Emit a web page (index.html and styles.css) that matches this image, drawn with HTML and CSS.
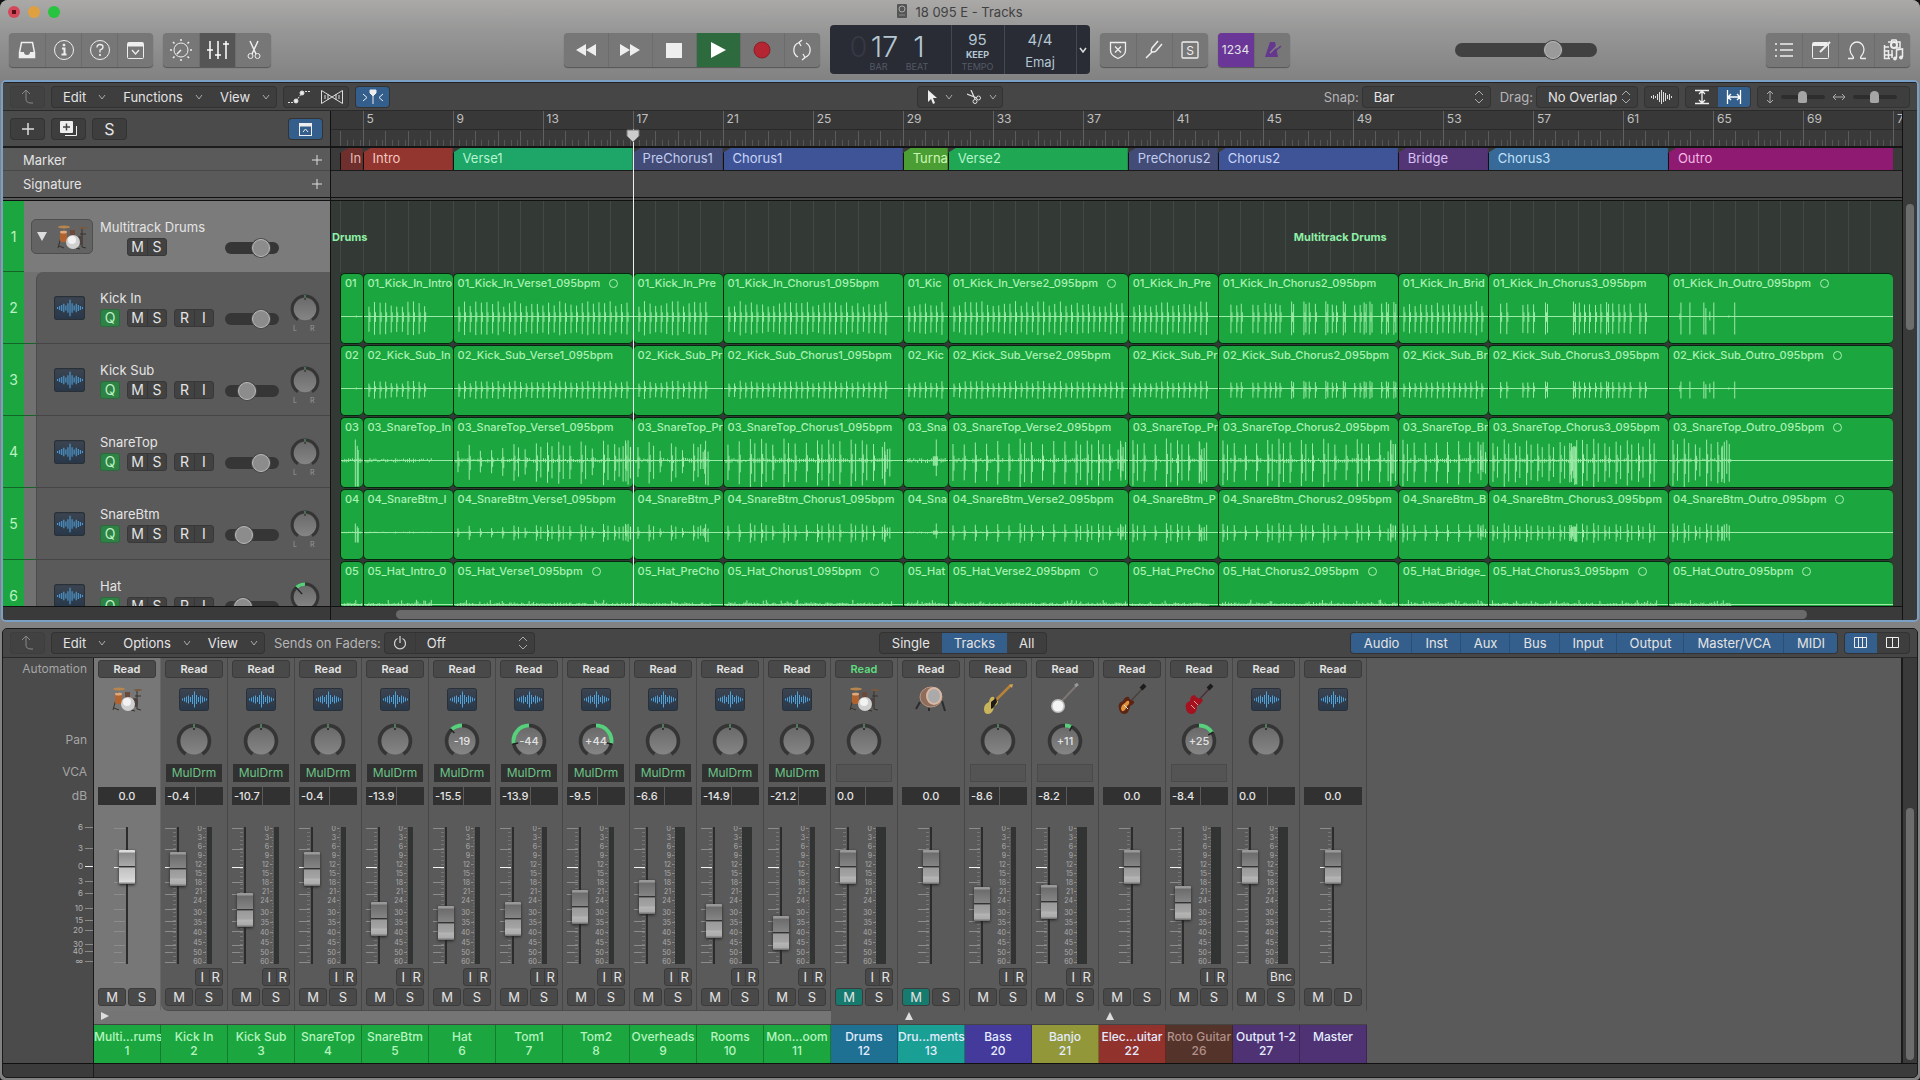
FILE: index.html
```
<!DOCTYPE html>
<html lang="en">
<head>
    <meta charset="UTF-8">
    <meta name="viewport" content="width=device-width, initial-scale=1.0">
    <title>18 095 E - Tracks</title>
    <link rel="stylesheet" href="styles.css">
</head>
<body>
    <!-- Shared icons -->
    <svg class="defs" width="0" height="0">
        <defs>
            <linearGradient id="waveBg" x1="0" y1="0" x2="0" y2="1">
                <stop offset="0" stop-color="#3c4450"/><stop offset="1" stop-color="#28384a"/>
            </linearGradient>
            <linearGradient id="knobBg" x1="0" y1="0" x2="0" y2="1">
                <stop offset="0" stop-color="#6a6a6a"/><stop offset="1" stop-color="#858585"/>
            </linearGradient>
            <symbol id="chev" viewBox="0 0 8 6"><path d="M1 1l3 4 3-4" fill="none" stroke="#aaa"/></symbol>
            <symbol id="updown" viewBox="0 0 10 14"><path d="M1 5l4-4 4 4M1 9l4 4 4-4" fill="none" stroke="#aaa"/></symbol>
            <symbol id="up" viewBox="0 0 14 16"><path d="M1 5l4-4 4 4M5 1v9q0 4 5 4h2" fill="none" stroke="#888"/></symbol>
            <symbol id="wave" viewBox="0 0 30 23">
                <rect x=".5" y=".5" width="29" height="22" rx="2" fill="url(#waveBg)" stroke="#2a3038"/>
                <path d="M3.500 10.500v2M5.500 9.500v4M7.500 8.500v6M9.500 7.500v8M11.500 9v5M13.500 7v9M15.500 3.500v16M17.500 7v9M19.500 9v5M21.500 7.500v8M23.500 8.500v6M25.500 9.500v4M27.500 10.500v2" stroke="#4fa3dd" fill="none"/>
            </symbol>
            <symbol id="kit" viewBox="0 0 32 26">
                <path d="M7 6L2 24M26 3v20l4 1M3 22l5 2M24 10h6M20 24l4 1" stroke="#37302c" fill="none"/>
                <ellipse cx="8" cy="3" rx="6" ry="1.500" fill="#b8854c"/>
                <ellipse cx="27" cy="4" rx="4" ry="1" fill="#7a5a3e"/>
                <rect x="4" y="8" width="7" height="10" rx="2" fill="#b0622f"/>
                <ellipse cx="7.500" cy="8" rx="3.500" ry="1.500" fill="#e0a878"/>
                <rect x="14" y="6" width="5" height="6" fill="#6b4a3a"/>
                <rect x="21" y="12" width="6" height="9" rx="3" fill="#4c4340"/>
                <circle cx="17" cy="18" r="7" fill="#cfcfcf"/><circle cx="16" cy="16" r="4" fill="#f2f2f2"/>
            </symbol>
            <symbol id="snare" viewBox="0 0 32 26">
                <path d="M5 16L1 23M27 15l3 10M14 22v3" stroke="#2b2b2b" stroke-width="2"/>
                <ellipse cx="16" cy="11" rx="11" ry="10" fill="#8f6d5c" stroke="#b89683"/>
                <ellipse cx="19" cy="10" rx="7" ry="8" fill="#aaa" stroke="#d9b9a4" stroke-width="2"/>
            </symbol>
            <symbol id="bass" viewBox="0 0 32 32">
                <path d="M13 18L29 2" stroke="#b9823a" stroke-width="2.500"/><path d="M27 2l4-1-1 4z" fill="#d7a655"/>
                <path d="M2 26q0-5 5-7 1-6 5-5 0 4 4 4 0 4-4 5-1 8-6 8-4 0-4-5z" fill="#c9b45c"/>
                <path d="M9 19l5-4 1 4-4 6-2 1z" fill="#1e1a16"/>
            </symbol>
            <symbol id="banjo" viewBox="0 0 32 32">
                <path d="M11 20L28 2" stroke="#7d7672" stroke-width="2"/><path d="M26 3l3-2" stroke="#999" stroke-width="3"/>
                <circle cx="9" cy="23" r="7" fill="#bbb"/><circle cx="9" cy="23" r="5.500" fill="#f4f4f4"/>
            </symbol>
            <symbol id="gtr" viewBox="0 0 32 32">
                <path d="M13 20L27 5" stroke="#4b4039" stroke-width="1.500"/><path d="M25 6l4-4" stroke="#1c1c1c" stroke-width="4"/>
                <path d="M3 26q-2-6 4-8 2-5 6-4 0 3 5 4 1 3-4 5-1 7-5 8-5 0-6-5z" fill="#5c2414"/>
                <path d="M5 26q0-4 4-6 2-3 4-2 1 3-2 5-2 6-5 5z" fill="#e2933a"/><path d="M8 22l4 4" stroke="#ddd"/>
            </symbol>
            <symbol id="roto" viewBox="0 0 32 32">
                <path d="M13 20L27 5" stroke="#4b3039" stroke-width="1.500"/><path d="M25 6l4-4" stroke="#1c1c1c" stroke-width="4"/>
                <path d="M3 26q-2-6 4-8 0-6 5-6 1 4 8 4-1 5-6 7 0 7-5 8-5 0-6-5z" fill="#a5121f"/>
                <path d="M8 22l4 4M11 18l4 4" stroke="#e8a0a0"/>
            </symbol>
        </defs>
    </svg>

    <div class="app">
        <!-- Title bar and transport -->
        <header>
            <div class="titlebar">
                <div class="lights"><i class="red"></i><i class="yellow"></i><i class="green"></i></div>
                <h1><svg width="10" height="14" viewBox="0 0 10 14"><rect width="10" height="14" rx="1" fill="#555"/><circle cx="5" cy="5" r="3" fill="none" stroke="#aaa"/><path d="M2 11h6" stroke="#888"/></svg>18 095 E - Tracks</h1>
            </div>
            <div class="toolbar">
                <div class="side">
                    <div class="group">
                        <button aria-label="Library"><svg width="20" height="20"><path d="M4.500 2.500h11l2 10v5h-15v-5z" fill="none" stroke="#eee" stroke-width="1.500"/><path d="M2 12h5q0 3 3 3t3-3h5v6H2z" fill="#eee"/></svg></button>
                        <button aria-label="Inspector"><svg width="22" height="22" fill="none" stroke="#eee"><circle cx="11" cy="11" r="9.500"/><path d="M9 9.500h2.500V15M8.500 15.500h5" stroke-width="2"/><circle cx="11" cy="6" r="1" fill="#eee"/></svg></button>
                        <button aria-label="Quick Help"><svg width="22" height="22" fill="none" stroke="#eee"><circle cx="11" cy="11" r="9.500"/><path d="M8 8.500q0-3 3-3t3 2.500q0 2-3 3v2.500" stroke-width="1.300"/><circle cx="11" cy="16" r=".7" fill="#eee"/></svg></button>
                        <button aria-label="Toolbar"><svg width="20" height="20" fill="none" stroke="#eee"><rect x="1.500" y="2.500" width="16" height="16" rx="1"/><path d="M2 4.500h15" stroke-width="4"/><path d="M6 10l3.500 4 3.500-4" stroke-width="1.300"/></svg></button>
                    </div>
                    <div class="group">
                        <button aria-label="Smart Controls"><svg width="24" height="24" fill="none" stroke="#eee"><circle cx="12" cy="12" r="7"/><path d="M12 12l-4 4M12 1v2M12 21v2M1 12h2M21 12h2M4 4l1.500 1.500M20 4l-1.500 1.500M4 20l1.500-1.500M20 20l-1.500-1.500" stroke-width="1.500"/></svg></button>
                        <button class="pressed" aria-label="Mixer"><svg width="22" height="20" fill="none" stroke="#fff" stroke-width="1.500"><path d="M3 1v18M11 1v18M19 1v18M0 10h6M8 15h6M16 4h6"/></svg></button>
                        <button aria-label="Editors"><svg width="16" height="20" fill="none" stroke="#eee"><path d="M4 1l6 13M12 1L6 14" stroke-width="1.500"/><circle cx="4.500" cy="16" r="2.500"/><circle cx="11.500" cy="16" r="2.500"/></svg></button>
                    </div>
                </div>
                <div class="group transport">
                    <button aria-label="Rewind"><svg width="22" height="14"><path d="M11 1v12L1 7zM21 1v12L11 7z" fill="#eee"/></svg></button>
                    <button aria-label="Forward"><svg width="22" height="14"><path d="M1 1v12l10-6zM11 1v12l10-6z" fill="#eee"/></svg></button>
                    <button aria-label="Stop"><svg width="16" height="16"><path d="M0 1h16v15H0z" fill="#eee"/></svg></button>
                    <button class="play" aria-label="Play"><svg width="16" height="18"><path d="M1 1v16l15-8z" fill="#fff"/></svg></button>
                    <button aria-label="Record"><svg width="18" height="18"><circle cx="9" cy="9" r="8" fill="#b32632" stroke="#8c1f29"/></svg></button>
                    <button class="cycle" aria-label="Cycle"><svg width="22" height="22" fill="none" stroke="#eee" stroke-width="1.300"><path d="M8 3.500a8 8 0 0 0-1 14.500M14 18.500A8 8 0 0 0 15 4M11 1l-3 2.500L10 7M11 21l3-2.500L12 15"/></svg></button>
                </div>
                <div class="lcd">
                    <div class="pos">
                        <b class="ghost">0</b><b>17</b><b class="beat">1</b>
                        <small>BAR</small><small class="beat">BEAT</small>
                    </div>
                    <div class="tempo"><span>95</span><em>KEEP</em><small>TEMPO</small></div>
                    <div class="key"><span>4/4</span><span class="maj">Emaj</span></div>
                    <button aria-label="Display mode"><svg width="8" height="6"><path d="M1 1l3 4 3-4" fill="none" stroke="#ddd" stroke-width="1.500"/></svg></button>
                </div>
                <div class="group">
                    <button aria-label="Replace"><svg width="20" height="20" fill="none" stroke="#eee" stroke-width="1.300"><path d="M2.500 2.500h15v8q0 5-7.500 8-7.500-3-7.500-8z"/><path d="M7 6.500l6 6M13 6.500l-6 6"/></svg></button>
                    <button aria-label="Tuner"><svg width="20" height="20" fill="none" stroke="#eee" stroke-width="1.500"><path d="M2 18l6-6M14 1L8 8q-2 4 1 4 2 0 3-1l6-7"/></svg></button>
                    <button aria-label="Solo"><svg width="18" height="20"><rect x="1" y="2" width="16" height="16" rx="1" fill="none" stroke="#eee" stroke-width="1.300"/><text x="9" y="14.500" text-anchor="middle" font-size="12" fill="#eee">S</text></svg></button>
                </div>
                <div class="group">
                    <button class="count">1234</button>
                    <button aria-label="Metronome"><svg width="20" height="20"><path d="M8 2h5l3 15H3z" fill="#65378f"/><path d="M8 13l8-8" stroke="#808080" stroke-width="1.500"/><path d="M11 13l8-7" stroke="#65378f" stroke-width="1.500"/></svg></button>
                </div>
                <div class="side right">
                    <input type="range" class="master" value="72" aria-label="Master volume">
                    <div class="group">
                        <button aria-label="Lists"><svg width="18" height="18" stroke="#eee" stroke-width="1.500"><path d="M5 3h13M5 9h13M5 15h13M0 3h2M0 9h2M0 15h2"/></svg></button>
                        <button aria-label="Notes"><svg width="20" height="20" fill="none" stroke="#eee"><rect x="1.500" y="2.500" width="16" height="16" rx="1"/><path d="M2 4.500h14" stroke-width="3"/><path d="M9 12l10-10" stroke-width="2"/></svg></button>
                        <button aria-label="Loops"><svg width="20" height="20" fill="none" stroke="#eee" stroke-width="1.300"><path d="M1 18.500h5q1 0 0-2-3-3-3-7a7 7.500 0 0 1 14 0q0 4-3 7-1 2 0 2h5"/></svg></button>
                        <button aria-label="Browsers"><svg width="22" height="22" fill="none" stroke="#eee"><circle cx="12" cy="6" r="3" stroke-width="2"/><path d="M6 3h3l1-2h4l1 2h3v6h-4" stroke-width="1.500"/><path d="M2.500 6v14M6.500 11v9M2 8h5M2 12h5M2 16h9M2 19.500h6M10 11v8" stroke-width="1.500"/><path d="M14.500 19v-8l6-1v8" stroke-width="1.500"/><circle cx="13" cy="19.500" r="1.500" fill="#eee"/><circle cx="19" cy="18.500" r="1.500" fill="#eee"/></svg></button>
                    </div>
                </div>
            </div>
        </header>

        <!-- Arrange window -->
        <section class="tracks">
            <div class="bar">
                <button class="btn dim" aria-label="Up"><svg width="14" height="16"><use href="#up"/></svg></button>
                <div class="menus">
                    <button>Edit<svg width="8" height="6"><use href="#chev"/></svg></button>
                    <button>Functions<svg width="8" height="6"><use href="#chev"/></svg></button>
                    <button>View<svg width="8" height="6"><use href="#chev"/></svg></button>
                </div>
                <div class="menus">
                    <button class="ic" aria-label="Automation"><svg width="24" height="16" fill="none" stroke="#ddd"><path d="M0 13.500h5M17 2.500h6" stroke-dasharray="2 1"/><path d="M8 12l6-8" stroke-dasharray="2 1"/><circle cx="8" cy="12" r="2" fill="#eee"/><circle cx="14" cy="4" r="2" fill="#eee"/></svg></button>
                    <button class="ic" aria-label="Flex"><svg width="22" height="16" fill="none" stroke="#ddd"><path d="M.5 1.500v13l21-13v13zM4 6v4M7 5v6M15 5v6M18 6v4"/></svg></button>
                </div>
                <button class="btn on" aria-label="Catch playhead"><svg width="22" height="16" fill="none" stroke="#eee"><path d="M1 5l4 3.500L1 12M21 5l-4 3.500 4 3.500"/><path d="M8 1h6v3l-3 3-3-3z" fill="#eee"/><path d="M11 5v10"/></svg></button>
                <div class="menus tools">
                    <button aria-label="Pointer tool"><svg width="10" height="14"><path d="M1 0v12l3-3 2 5 2-1-2-5h4z" fill="#eee"/></svg><svg width="8" height="6"><use href="#chev"/></svg></button>
                    <button aria-label="Scissors tool"><svg width="14" height="14" fill="none" stroke="#ddd"><path d="M4 0l4 9M0 4l10 4" stroke-width="1.300"/><circle cx="8" cy="11.500" r="2"/><circle cx="11.500" cy="8" r="2"/></svg><svg width="8" height="6"><use href="#chev"/></svg></button>
                </div>
                <label for="snap">Snap:</label>
                <div class="pick snap"><select id="snap"><option>Bar</option></select><svg width="10" height="14"><use href="#updown"/></svg></div>
                <label for="drag">Drag:</label>
                <div class="pick drag"><select id="drag"><option>No Overlap</option></select><svg width="10" height="14"><use href="#updown"/></svg></div>
                <button class="btn" aria-label="Waveform zoom"><svg width="22" height="14"><path d="M.5 6v2M2.500 5v4M4.500 6v2M6.500 4v6M8.500 2v10M10.500 0v14M12.500 2v10M14.500 3v8M16.500 5v4M18.500 4v6M20.500 6v2" stroke="#ddd"/></svg></button>
                <div class="menus">
                    <button class="ic" aria-label="Vertical auto zoom"><svg width="16" height="16" fill="none" stroke="#eee"><path d="M1 1.500h14M1 14.500h14M8 3v10M5 5l3-3 3 3M5 11l3 3 3-3" stroke-width="1.300"/></svg></button>
                    <button class="ic on" aria-label="Horizontal auto zoom"><svg width="16" height="16" fill="none" stroke="#fff"><path d="M1.500 1v14M14.500 1v14M3 8h10M5 5L2 8l3 3M11 5l3 3-3 3" stroke-width="1.300"/></svg></button>
                </div>
                <div class="menus zooms">
                    <label for="zv" aria-label="Vertical zoom"><svg width="8" height="14" fill="none" stroke="#aaa"><path d="M4 1v12M1 4l3-3 3 3M1 10l3 3 3-3"/></svg></label>
                    <input type="range" id="zv" value="48">
                    <label for="zh" aria-label="Horizontal zoom"><svg width="14" height="8" fill="none" stroke="#aaa"><path d="M1 4h12M4 1L1 4l3 3M10 1l3 3-3 3"/></svg></label>
                    <input type="range" id="zh" value="48">
                </div>
            </div>
            <div class="arrange">
                <div class="heads">
                    <div class="headbar">
                        <button class="btn" aria-label="Add track"><svg width="12" height="12"><path d="M0 6h12M6 0v12" stroke="#ddd" stroke-width="1.500"/></svg></button>
                        <button class="btn" aria-label="Duplicate track"><svg width="18" height="16"><path d="M5 14.500h11.500V5" fill="none" stroke="#eee"/><rect width="13" height="12" rx="1" fill="#eee"/><path d="M3 6h7M6.500 2.500v7" stroke="#444" stroke-width="1.500"/></svg></button>
                        <button class="btn solo">S</button>
                        <button class="btn on" aria-label="Global tracks"><svg width="14" height="14" fill="none" stroke="#eee"><rect x=".5" y="1.500" width="12" height="12"/><path d="M0 3h13" stroke-width="3"/><path d="M4 10l2.500-3L9 10"/></svg></button>
                    </div>
                    <div class="global">Marker<button aria-label="Add marker"><svg width="10" height="10"><path d="M0 5h10M5 0v10" stroke="#ddd"/></svg></button></div>
                    <div class="global sig">Signature<button aria-label="Add signature"><svg width="10" height="10"><path d="M0 5h10M5 0v10" stroke="#ddd"/></svg></button></div>
                    <div class="list" id="heads"></div>
                    <div class="hscroll"></div>
                </div>
                <div class="timeline">
                    <div class="ruler" id="ruler"></div>
                    <div class="markers" id="markers"></div>
                    <div class="siglane"></div>
                    <div class="list" id="lanes">
                        <div class="lane folder"><span>Drums</span><span>Multitrack Drums</span></div>
                    </div>
                    <div class="hscroll"><i></i></div>
                    <div class="playhead"><svg width="14" height="14"><path d="M1 1h12v6l-6 6-6-6z" fill="#ccc" stroke="#777"/></svg></div>
                </div>
                <div class="vscroll"><i></i></div>
            </div>
        </section>

        <!-- Mixer window -->
        <section class="mixer">
            <div class="bar">
                <button class="btn dim" aria-label="Up"><svg width="14" height="16"><use href="#up"/></svg></button>
                <div class="menus">
                    <button>Edit<svg width="8" height="6"><use href="#chev"/></svg></button>
                    <button>Options<svg width="8" height="6"><use href="#chev"/></svg></button>
                    <button>View<svg width="8" height="6"><use href="#chev"/></svg></button>
                </div>
                <label for="sends">Sends on Faders:</label>
                <div class="pick sends"><button aria-label="Power"><svg width="14" height="14" fill="none" stroke="#ccc" stroke-width="1.300"><path d="M4.500 2.500a5.500 5.500 0 1 0 5 0M7 0v7"/></svg></button><select id="sends"><option>Off</option></select><svg width="10" height="14"><use href="#updown"/></svg></div>
                <div class="menus seg view"><button>Single</button><button class="on">Tracks</button><button>All</button></div>
                <div class="menus seg filters">
                    <button class="on">Audio</button><button class="on">Inst</button><button class="on">Aux</button><button class="on">Bus</button><button class="on">Input</button><button class="on">Output</button><button class="on">Master/VCA</button><button class="on">MIDI</button>
                </div>
                <div class="menus">
                    <button class="ic on" aria-label="Narrow strips"><svg width="14" height="12" fill="none" stroke="#eee"><path d="M.5.500h12v10H.500zM4.500 0v11M8.500 0v11"/></svg></button>
                    <button class="ic" aria-label="Wide strips"><svg width="14" height="12" fill="none" stroke="#eee"><path d="M.5.500h12v10H.500zM6.500 0v11"/></svg></button>
                </div>
            </div>
            <div class="console">
                <div class="legend">
                    <span class="l-auto">Automation</span><span class="l-pan">Pan</span><span class="l-vca">VCA</span><span class="l-db">dB</span>
                    <svg id="scale" width="90" height="142"></svg>
                </div>
                <div class="strips" id="strips"></div>
                <div class="empty"></div>
                <div class="vscroll"><i></i></div>
            </div>
            <div class="foot"></div>
        </section>
    </div>

    <script src="script.js"></script>
</body>
</html>
```

FILE: styles.css
```
* {
    box-sizing: border-box;
}

body {
    margin: 0;
    background: #111;
    color: #e4e4e4;
    font-family: Inter, "Liberation Sans", sans-serif;
    font-size: 13px;
    line-height: 16px;
}

button, select, input {
    font: inherit;
    color: inherit;
    margin: 0;
    padding: 0;
    border: 0;
    background: none;
}

button {
    display: flex;
    align-items: center;
    justify-content: center;
}

svg {
    display: block;
    flex: none;
}

svg text {
    font-family: Inter, "Liberation Sans", sans-serif;
}

.defs {
    position: absolute;
}

.app {
    height: 100vh;
    display: grid;
    grid-template-rows: auto minmax(0, 1fr) auto;
    background: #828282;
    border-radius: 8px 8px 4px 4px;
    overflow: hidden;
    padding: 0 1px 2px;
}

/* Title bar */
header {
    height: 80px;
    margin: 0 -1px;
    background: linear-gradient(#aaa9a7, #969696 40%, #828282);
}

.titlebar {
    display: grid;
    grid-template-columns: 1fr auto 1fr;
    align-items: center;
    height: 24px;
}

.titlebar h1 {
    margin: 0;
    display: flex;
    gap: 8px;
    font-size: 13px;
    font-weight: 400;
    color: #414141;
}

.lights {
    display: flex;
    gap: 8px;
    padding-left: 8px;
}

.lights i {
    width: 12px;
    height: 12px;
    border-radius: 50%;
}

.red { background: radial-gradient(#551018 25%, #d4495a 30%); }
.yellow { background: #dfa140; }
.green { background: #26c43f; }

.toolbar {
    display: flex;
    gap: 10px;
    align-items: center;
    height: 51px;
    padding: 0 10px 0 9px;
}

.side {
    flex: 1 1 0;
    display: flex;
    gap: 10px;
}

.group {
    display: flex;
    height: 34px;
    border-radius: 4px;
    overflow: hidden;
    background: #777;
    box-shadow: 0 1px 1px #555;
}

.group button {
    width: 36px;
    border-left: 1px solid #6c6c6c;
}

.group button:first-child { border-left: 0; }
.group .pressed { background: #555; }
.transport button { width: 44px; }
.transport .cycle { width: 36px; }
.group .play { background: #2d6a3d; }

.group .count {
    background: #6a3799;
    font-size: 12px;
}

.right {
    flex-basis: 66px;
    justify-content: space-between;
}

/* LCD */
.lcd {
    display: flex;
    height: 49px;
    width: 260px;
    border-radius: 4px;
    background: #292c35;
    color: #b4c6d2;
    text-align: center;
}

.lcd > * { border-right: 1px solid #444852; }
.lcd > button { border: 0; flex: 1; }

.pos {
    width: 122px;
    padding: 4px 20px 0;
    display: grid;
    grid-template-columns: 16px 38px 1fr;
    grid-template-rows: 32px 12px;
}

.pos b {
    font-weight: 300;
    font-size: 29px;
    line-height: 36px;
}

.pos .ghost { color: #363943; }
.pos small { grid-column: 1 / 3; padding-left: 4px; }
.pos small.beat { grid-column: 3; padding: 0; }
.pos b.beat { padding-left: 4px; }

.lcd small {
    font-size: 9px;
    line-height: 12px;
    color: #545964;
}

.tempo, .key {
    display: flex;
    flex-direction: column;
    padding-top: 6px;
    font-size: 15px;
}

.tempo { width: 53px; line-height: 18px; }
.key { width: 72px; gap: 4px; line-height: 18px; }
.maj { font-size: 13px; }

.tempo em {
    font: 700 9px/12px Inter, sans-serif;
}

/* Round sliders */
input[type=range] {
    appearance: none;
    height: 12px;
    border-radius: 6px;
    background: #363636;
}

input[type=range]::-webkit-slider-thumb {
    appearance: none;
    width: 18px;
    height: 18px;
    border-radius: 50%;
    background: #8c8c8c;
    border: 1px solid #bbb;
    box-shadow: 0 0 0 1px #4a4a4a;
}

input.master {
    width: 142px;
    height: 14px;
    border-radius: 7px;
    margin: 10px 0 0 155px;
    background: #414141;
}

input.master::-webkit-slider-thumb { background: #9a9a9a; }

/* Windows */
.tracks {
    display: flex;
    flex-direction: column;
    min-height: 0;
    border: 2px solid #7ba0c6;
    border-radius: 5px;
    background: #3c3c3d;
    margin-bottom: 6px;
    overflow: hidden;
}

.mixer {
    margin: 0 1px;
    border: 1px solid #1a1a1a;
    border-radius: 5px;
    overflow: hidden;
    background: #3b3b3b;
}

.bar {
    display: flex;
    align-items: center;
    gap: 8px;
    height: 29px;
    flex: none;
    padding: 0 8px;
    background: #464647;
    border-bottom: 1px solid #2a2a2a;
}

.tracks .bar { border-top: 1px solid #222; }

.btn, .menus, .pick {
    height: 20px;
    border-radius: 3px;
    background: #3e3e3f;
    box-shadow: 0 0 0 1px #333;
}

.btn {
    width: 33px;
}

.dim { background: #424243; box-shadow: 0 0 0 1px #3e3e3e; }
.on, .btn.on { background: #345f8c; }

.menus {
    display: flex;
    overflow: hidden;
}

.menus button {
    padding: 0 6px 0 11px;
    gap: 12px;
}

.menus .ic {
    width: 32px;
    padding: 0;
}

.bar label {
    color: #b5b5b5;
    margin-right: -4px;
    white-space: nowrap;
}

.tools { margin-left: auto; }
.tools button { padding: 0 5px 0 9px; gap: 8px; }
.tools + label { margin-left: 314px; }

.pick {
    display: flex;
    align-items: center;
    position: relative;
}

.pick select {
    appearance: none;
    flex: 1;
    height: 20px;
    padding-left: 11px;
    outline: 0;
}

.pick > svg {
    position: absolute;
    right: 6px;
    pointer-events: none;
}

.snap { width: 127px; margin-right: 2px; }
.drag { width: 100px; }
.sends { width: 149px; }
.sends button { width: 31px; height: 20px; border-right: 1px solid #383838; }

.zooms {
    align-items: center;
    width: 151px;
    padding: 0 8px;
    gap: 7px;
}

.zooms label { margin: 0; }

.zooms input {
    width: 44px;
    min-width: 0;
    height: 4px;
    background: #2d2d2d;
}

.zooms input::-webkit-slider-thumb {
    width: 9px;
    height: 12px;
    border: 0;
    border-radius: 5px 5px 2px 2px;
    background: #a5a5a5;
    box-shadow: none;
}

/* Arrange area */
.arrange {
    flex: 1;
    min-height: 0;
    display: grid;
    grid-template-columns: 327px minmax(0, 1fr) 14px;
}

.heads, .timeline {
    display: flex;
    flex-direction: column;
    min-height: 0;
    min-width: 0;
    position: relative;
}

.timeline {
    border-left: 1px solid #111;
    border-right: 1px solid #111;
    overflow: hidden;
}

.headbar {
    display: flex;
    align-items: center;
    gap: 8px;
    height: 37px;
    flex: none;
    padding: 0 8px;
    background: #4b4b4b;
    border-bottom: 2px solid #1c1c1c;
}

.headbar .btn:last-child { margin-left: auto; }
.solo { font-size: 16px; }

.global {
    display: flex;
    flex: none;
    justify-content: space-between;
    align-items: center;
    height: 23px;
    padding: 2px 8px 0 20px;
    background: #5a5a5a;
    border-bottom: 1px solid #484848;
}

.sig {
    height: 30px;
    padding-bottom: 3px;
    border-bottom: 4px double #111;
}

.list {
    flex: 1;
    min-height: 0;
    overflow: hidden;
}

.track {
    display: grid;
    grid-template-columns: 21px 1fr;
    height: 72px;
    color: #b9f2c0;
    background: #1ca63f;
    border-bottom: 1px solid #156428;
    font-size: 14px;
    align-items: center;
    text-align: center;
}

.panel {
    display: grid;
    grid-template-columns: 45px 114px 54px 30px;
    column-gap: 11px;
    height: 72px;
    margin-left: 12px;
    padding-left: 7px;
    text-align: left;
    color: #e4e4e4;
    background: #5a5a5a;
    border-left: 1px solid #4c4c4c;
    border-bottom: 1px solid #464646;
}

.track:has(.panel) { background: linear-gradient(90deg, #1ca63f 21px, #717171 21px); }
.first .panel { border-top-left-radius: 8px; }
.track:first-child { height: 71px; }

.panel.top {
    grid-template-columns: 58px 114px 54px;
    height: 71px;
    margin: 0;
    background: #7b7b7b;
    border: 0;
}

.kitbox {
    align-self: center;
    display: flex;
    align-items: center;
    justify-content: space-around;
    width: 62px;
    height: 35px;
    border-radius: 5px;
    background: #636363;
    border: 1px solid #4e4e4e;
}

.panel > svg { align-self: center; margin-left: 10px; }
.panel .name { padding-top: 18px; white-space: nowrap; font-size: 13px; }
.btns { display: flex; gap: 7px; margin-top: 3px; font-size: 14px; }
.panel.top .btns { padding-left: 27px; }

.pair {
    display: flex;
    height: 18px;
    border-radius: 3px;
    background: #424242;
    border: 1px solid #383838;
    overflow: hidden;
}

.pair button { width: 19px; height: 16px; }
.pair button + button { border-left: 1px solid #363636; }
.pair.q { background: #2f8246; border-color: #2a6b3b; color: #b9f2c0; }
.pair.q button { width: 18px; }

.panel input {
    width: 54px;
    margin-top: 41px;
}

.panel .pan { margin: 22px 0 0; }

/* Timeline: one column per bar */
.ruler {
    display: grid;
    grid-template-columns: repeat(69, minmax(0, 1fr)) 9px;
    height: 37px;
    flex: none;
    padding-left: 9px;
    background: linear-gradient(#383838 18px, #2a2a2a 18px, #2a2a2a 19px, #3a3a3a 19px);
    border-bottom: 2px solid #151515;
    white-space: nowrap;
    position: relative;
    overflow: hidden;
}

.ruler span {
    border-left: 1px solid #606060;
    padding-left: 3px;
    line-height: 16px;
    color: #c0c0c0;
    grid-row: 1;
    font-size: 12px;
}

.ruler i {
    grid-row: 1;
    align-self: end;
    height: 15px;
    border-left: 1px solid #5a5a5a;
    background: repeating-linear-gradient(90deg, transparent 0, transparent 25%, #555 25%, #555 calc(25% + 1px)) 0 100% / 100% 6px no-repeat;
    min-width: 0;
}

.markers, .lane {
    display: grid;
    grid-template-columns: minmax(0, 1fr) minmax(0, 4fr) minmax(0, 8fr) minmax(0, 4fr) minmax(0, 8fr) minmax(0, 2fr) minmax(0, 8fr) minmax(0, 4fr) minmax(0, 8fr) minmax(0, 4fr) minmax(0, 8fr) minmax(0, 10fr);
    padding: 0 9px;
}

.markers {
    height: 23px;
    flex: none;
    background: #3a3a3a;
    border-bottom: 1px solid #1a1a1a;
}

.markers span {
    padding-left: 9px;
    line-height: 21px;
    color: #d8def0;
    white-space: nowrap;
    overflow: hidden;
    border-left: 1px solid #111;
    clip-path: polygon(0 5px, 8px 0, 100% 0, 100% 100%, 0 100%);
}

.siglane {
    height: 30px;
    flex: none;
    background: #474747;
    border-bottom: 4px double #111;
}

.timeline .list { background: #333935; }

.lane {
    height: 72px;
}

.lane.folder {
    display: flex;
    align-items: center;
    height: 71px;
    padding: 0 0 0 1px;
    font-size: 11px;
    font-weight: 700;
    color: #8ef0a6;
    position: relative;
}

.folder span { position: relative; z-index: 1; }
.folder span:last-of-type { margin-left: 59%; }

/* Bar lines behind the folder labels */
.gridlines {
    position: absolute;
    inset: 0 9px;
    display: grid;
    grid-template-columns: repeat(69, minmax(0, 1fr));
}

.gridlines i { border-left: 1px solid #424944; }

.region {
    position: relative;
    margin-top: 1px;
    height: 71px;
    border: 1px solid #04280d;
    border-width: 1px 0 1px 1px;
    border-radius: 5px;
    background: #1ca63f;
    color: #a9f2b4;
    font-size: 11px;
    line-height: 18px;
    white-space: nowrap;
    overflow: hidden;
}

.region b {
    display: flex;
    align-items: center;
    font-weight: 500;
    padding-left: 4px;
}

.region b i {
    width: 9px;
    height: 9px;
    margin-left: 9px;
    border: 1px solid #a9f2b4;
    border-radius: 50%;
}

.region svg {
    position: absolute;
    inset: 0;
    width: 100%;
    height: 100%;
}

.hscroll {
    height: 14px;
    flex: none;
    background: #3a3a3b;
    border-top: 1px solid #111;
    padding: 3px 0;
    position: relative;
    z-index: 2;
}

.hscroll i {
    display: block;
    height: 9px;
    margin: 0 95px 0 65px;
    border-radius: 5px;
    background: #6a6a6a;
}

.playhead {
    position: absolute;
    top: 18px;
    bottom: 0;
    left: calc(9px + (100% - 18px) * 13 / 69);
    width: 1px;
    background: #eee;
}

.playhead svg { margin-left: -7px; }

.vscroll {
    width: 14px;
    padding: 0 3px;
    background: #3a3a3b;
}

.vscroll i {
    display: block;
    width: 8px;
    height: 126px;
    margin-top: 93px;
    border-radius: 4px;
    background: #6d6d6d;
}

/* Mixer */
.mixer .bar label { margin-left: 2px; }
.mixer .view { margin-left: 338px; }
.mixer .filters { margin-left: auto; }
.mixer .seg button { padding: 0 12px; border-right: 1px solid #2b5078; }
.mixer .seg button:last-child { border: 0; }
.mixer .filters button { padding: 0 12px 0 13px; }
.mixer .view button { border: 0; }

.console {
    display: flex;
    height: 406px;
    border-bottom: 1px solid #111;
}

.legend {
    width: 91px;
    padding: 2px 0;
    background: #4b4b4b;
    border-right: 1px solid #1a1a1a;
    color: #a6a6a6;
    font-size: 12px;
    text-align: right;
}

.legend span { display: block; padding-right: 6px; line-height: 18px; }
.l-pan { margin-top: 53px; }
.l-vca { margin-top: 14px; }
.l-db { margin-top: 6px; }
.legend svg { margin-top: 19px; }

.strips { display: flex; }

.strip {
    width: 67px;
    display: flex;
    flex-direction: column;
    background: #5a5a5a;
}

.strip.kit { background: #757575; }

.upper {
    padding: 2px 0 4px;
    border-right: 1px solid #474747;
    border-bottom: 1px solid #5a5a5a;
    background: #5a5a5a;
}

.kit .upper { border-bottom-color: #4c4c4c; }
.strip:nth-child(2) .upper { border-bottom-left-radius: 8px; }

.kit.sel .upper {
    background: #777;
    border-color: #777;
    border-right-color: #666;
}

.read, .ms button, .ir {
    border: 1px solid #3b3b3b;
    border-radius: 3px;
    background: #494949;
}

.read {
    width: 58px;
    height: 18px;
    margin-left: 4px;
    font-size: 11px;
    font-weight: 600;
}

.read.live { color: #5fdc80; }

.pic {
    height: 42px;
    display: grid;
    place-items: center;
}

.knob {
    height: 41px;
    display: grid;
    place-items: center;
}

.vca {
    height: 18px;
    width: 56px;
    margin: 3px 0 0 5px;
    text-align: center;
    font-size: 12px;
    line-height: 18px;
    color: #6cc287;
    background: #313131;
}

.vca.none { background: none; }
.vca.open { background: #545454; border: 1px solid #4a4a4a; }

.db {
    display: flex;
    height: 18px;
    width: 58px;
    margin: 5px 0 21px 4px;
    background: #313131;
    font-size: 11px;
    font-weight: 500;
    line-height: 18px;
}

.db span { flex: 1; text-align: center; }
.db i { width: 28px; border-left: 1px solid #5a5a5a; }
.db.split span { text-align: left; padding-left: 2px; }

.fader {
    display: grid;
    height: 138px;
}

.fader > * { grid-area: 1 / 1; }

.fader input {
    writing-mode: vertical-lr;
    direction: rtl;
    width: 16px;
    height: 138px;
    margin-left: 9px;
    background: none;
}

.fader.solo-f input { margin-left: 25px; }

.fader input::-webkit-slider-thumb {
    width: 16px;
    height: 34px;
    border: 0;
    border-radius: 1px;
    background: linear-gradient(#999 0, #999 2px, #6c6c6c 3px, #858585 16px, #222 16px, #444 17px, #9a9a9a 18px, #a4a4a4 26px, #b5b5b5 27px, #aaa 32px, #777 33px);
    box-shadow: 0 1px 3px #222;
}

.sel .fader input::-webkit-slider-thumb {
    background: linear-gradient(#ddd 0, #ddd 2px, #8a8a8a 3px, #aaa 16px, #222 16px, #444 17px, #c2c2c2 18px, #d0d0d0 27px, #ddd 32px, #888 33px);
}

.irrow { height: 24px; padding: 4px 4px 0 0; display: flex; justify-content: flex-end; }

.ir {
    display: flex;
    width: 28px;
    height: 18px;
    font-size: 13px;
}

.ir button { flex: 1; }
.ir button + button { border-left: 1px solid #3b3b3b; }
.ir.bnc { font-size: 12px; }

.ms { display: flex; gap: 2px; padding-left: 4px; font-size: 13px; }
.ms button { width: 28px; height: 18px; }
.ms .muted { background: #177a6e; }

.under {
    flex: 1;
    padding: 1px 0 0 7px;
    border-bottom: 1px solid #444;
}

.title {
    height: 38px;
    padding-top: 5px;
    text-align: center;
    font-size: 12px;
    line-height: 14px;
    font-weight: 500;
    border-right: 1px solid rgba(0, 0, 0, 0.25);
    white-space: nowrap;
}

.title span { display: block; }

.empty {
    flex: 1;
    background: #5a5a5a;
    border-right: 2px solid #1a1a1a;
}

.mixer .vscroll i { height: 252px; margin-top: 150px; }
.foot { height: 13px; margin-left: 90px; border-left: 1px solid #1a1a1a; }
```

FILE: script.js
```
// Marker name, length in bars, colour
const sections = [
    ['In', 1, '#6e2f2d', '#e5b5b0'], ['Intro', 4, '#93362f', '#f4c9c3'], ['Verse1', 8, '#1ea568', '#b5f5cf'],
    ['PreChorus1', 4, '#424c77', '#c3cdf0'], ['Chorus1', 8, '#3f5496', '#c9d4f8'], ['Turna', 2, '#4b9e33', '#cdf7b5'],
    ['Verse2', 8, '#1fa754', '#b5f5c8'], ['PreChorus2', 4, '#424c77', '#c3cdf0'], ['Chorus2', 8, '#3f5496', '#c9d4f8'],
    ['Bridge', 4, '#533575', '#dcc0f5'], ['Chorus3', 8, '#386a99', '#c0e0f8'], ['Outro', 10, '#8e1a72', '#f5b8e5']
];

// short labels are the ones cut off by a narrow region
const tracks = [
    { name: 'Kick In', file: '01_Kick_In', vol: 76, ring: [2, 6, 11], cut: { 0: '01', 1: '01_Kick_In_Intro', 3: '01_Kick_In_Pre', 5: '01_Kic', 7: '01_Kick_In_Pre', 9: '01_Kick_In_Brid' } },
    { name: 'Kick Sub', file: '02_Kick_Sub', vol: 36, ring: [11], cut: { 0: '02', 1: '02_Kick_Sub_In', 3: '02_Kick_Sub_Pr', 5: '02_Kic', 7: '02_Kick_Sub_Pr', 9: '02_Kick_Sub_Br' } },
    { name: 'SnareTop', file: '03_SnareTop', vol: 76, ring: [11], cut: { 0: '03', 1: '03_SnareTop_In', 3: '03_SnareTop_Pr', 5: '03_Sna', 7: '03_SnareTop_Pr', 9: '03_SnareTop_Br' } },
    { name: 'SnareBtm', file: '04_SnareBtm', vol: 28, ring: [11], cut: { 0: '04', 1: '04_SnareBtm_I', 3: '04_SnareBtm_P', 5: '04_Sna', 7: '04_SnareBtm_P', 9: '04_SnareBtm_B' } },
    { name: 'Hat', file: '05_Hat', vol: 25, ring: [2, 4, 6, 8, 10, 11], cut: { 0: '05', 1: '05_Hat_Intro_0', 3: '05_Hat_PreCho', 5: '05_Hat', 7: '05_Hat_PreCho', 9: '05_Hat_Bridge_' } }
];

function random(seed) {
    return function () {
        seed = (seed * 16807) % 2147483647;
        return seed / 2147483647;
    };
}

// ends of the audio inside each region, as a share of its length
const ends = [1, 0.76, 1, 0.86, 0.94, 1, 1, 0.9, 1, 1, 0.94, 0.28];

function wave(t, s) {
    const w = sections[s][1] * 22.5;
    const end = w * ends[s];
    const kick = t < 2;
    const rnd = random(97 + s * 31 + (kick ? 0 : 7));
    let d = 'M0 42.5H' + w;
    const spike = (x, up, down) => { d += `M${x.toFixed(1)} ${(42.5 - up).toFixed(1)}V${(42.5 + down).toFixed(1)}`; };

    if (kick) {
        const k = t === 0 ? [14, 18] : [7, 10];
        if (s === 0) {
            spike(16, 1, 1);
        } else if (s === 11) {
            [12, 21, 35, 37, 45, 66].forEach(x => spike(x, k[0] * (x === 37 ? 0.6 : 1), k[1]));
            spike(11, 3, 3); spike(41, 5, 4); spike(60, 1, 1);
        } else {
            const loose = s === 8 || s === 10;
            for (let x = 5; x < end - 2; x += 5.63) {
                const r = rnd();
                if (loose && r < 0.22) continue;
                const px = loose ? x + rnd() * 2 : x;
                spike(px, k[0] * (0.7 + r * 0.4), k[1] * (0.85 + r * 0.2));
                spike(px + 1, k[0] * 0.3, k[1] * 0.3);
                if (loose && r > 0.75) spike(px + 2, k[0] * 0.9, k[1] * 0.9);
            }
        }
    } else if (t < 4) {
        const k = t === 2 ? [21, 26] : [9, 10];
        const noise = t === 2 ? 2.5 : 1;
        for (let x = 2; x < end; x += 2) spike(x, rnd() * noise, rnd() * noise);
        if (s === 0) {
            spike(15, k[0], k[1]); spike(17, k[0] * 0.7, k[1]); spike(18, k[0] * 0.5, k[1]);
        } else if (s !== 1 && s !== 5) {
            const soft = s === 2 || s === 3;
            for (let x = 4; x < end - 3; x += 11.25) {
                const r = rnd();
                const g = soft ? 0.45 + r * 0.5 : 0.75 + r * 0.3;
                spike(x, k[0] * g, k[1] * g);
                spike(x + 1, k[0] * g * 0.3, k[1] * g * 0.5);
                if (r > 0.6 || s === 10 || s === 11) spike(x + 4.5, k[0] * g * 0.8, k[1] * g * 0.8);
            }
            // fill before the next section
            const fill = s === 10 ? end * 0.48 : end - 10;
            const step = s === 10 ? 1 : 2.5;
            for (let i = 0; i < (s === 10 ? 8 : 4); i++) spike(fill + i * step, k[0] * (0.4 + rnd() * 0.6), k[1] * (0.3 + rnd() * 0.7));
        } else if (s === 5) {
            [30, 31, 32, 33, 34].forEach(x => spike(x, k[0] * 0.2, k[1] * 0.2));
            spike(33, k[0], k[1] * 0.6);
        }
    } else {
        for (let x = 2; x < end; x += 1.5) spike(x, rnd() * (rnd() > 0.85 ? 5 : 2), 2);
    }
    return `<svg viewBox="0 0 ${w} 69" preserveAspectRatio="none"><path d="${d}" fill="none" stroke="#9deba8" stroke-width="1"/></svg>`;
}

// Pan knob, value runs from -64 to +64
function knob(value, size, label) {
    const pt = (deg, r) => {
        const a = (deg - 90) * Math.PI / 180;
        return (20 + r * Math.cos(a)).toFixed(2) + ' ' + (20 + r * Math.sin(a)).toFixed(2);
    };
    const deg = value / 64 * 147;
    let out = `<circle cx="20" cy="20" r="13.500" fill="url(#knobBg)"/><path d="M${pt(-147, 15.5)}A15.500 15.500 0 1 1 ${pt(147, 15.5)}" fill="none" stroke="#353535" stroke-width="3.500"/>`;
    if (value) {
        out += `<path d="M${pt(0, 15.5)}A15.500 15.500 0 0 ${value > 0 ? 1 : 0} ${pt(deg, 15.5)}" fill="none" stroke="#58cf7c" stroke-width="4"/>`;
    }
    out += `<path d="M${pt(deg, 17)}L${pt(deg, label || !value ? 11 : 5)}" stroke="#222" stroke-width="1.500"/>`;
    if (!value) out += '<path d="M20 3v4" stroke="#7cc894"/>';
    if (label) out += `<text x="20" y="24" text-anchor="middle" font-size="11" font-weight="500" fill="#e2e2e2">${label}</text>`;
    return `<svg class="pan" width="${size}" height="${size}" viewBox="2 2 36 36">${out}</svg>`;
}

// Track headers
let heads = `<div class="track"><span>1</span><div class="panel top">
    <div class="kitbox"><svg width="10" height="9"><path d="M0 0h10L5 9z" fill="#ddd"/></svg><svg width="32" height="26"><use href="#kit"/></svg></div>
    <div class="name">Multitrack Drums<div class="btns"><div class="pair"><button>M</button><button>S</button></div></div></div>
    <input type="range" value="76" aria-label="Multitrack Drums volume"></div></div>`;
tracks.forEach((t, i) => {
    const pan = i === 4 ? -19 : 0;
    heads += `<div class="track ${i === 0 ? 'first' : ''}"><span>${i + 2}</span><div class="panel">
        <svg width="31" height="24"><use href="#wave"/></svg>
        <div class="name">${t.name}<div class="btns"><div class="pair q"><button>Q</button></div><div class="pair"><button>M</button><button>S</button></div><div class="pair"><button>R</button><button>I</button></div></div></div>
        <input type="range" value="${t.vol}" aria-label="${t.name} volume">
        <div>${knob(pan, 30)}<svg width="30" height="8"><text x="3" y="7" font-size="7" fill="#999">L</text><text x="20" y="7" font-size="7" fill="#999">R</text></svg></div>
    </div></div>`;
});
document.getElementById('heads').innerHTML = heads;

// Ruler
let ruler = '';
for (let i = 0; i < 69; i++) ruler += `<i style="grid-column:${i + 1}"></i>`;
for (let bar = 5; bar <= 73; bar += 4) {
    ruler += `<span style="grid-column:${bar - 3} / span ${bar < 73 ? 4 : 1}">${bar}</span>`;
}
document.getElementById('ruler').innerHTML = ruler;

document.getElementById('markers').innerHTML = sections.map(s =>
    `<span style="background:${s[2]};color:${s[3]}">${s[0]}</span>`).join('');

// Regions
const lanes = document.getElementById('lanes');
lanes.querySelector('.folder').insertAdjacentHTML('beforeend', '<div class="gridlines">' + '<i></i>'.repeat(69) + '</div>');
lanes.insertAdjacentHTML('beforeend', tracks.map((t, ti) => '<div class="lane">' + sections.map((s, si) => {
    const label = t.cut[si] || `${t.file}_${s[0]}_095bpm`;
    return `<div class="region"><b>${label}${t.ring.includes(si) ? '<i></i>' : ''}</b>${wave(ti, si)}</div>`;
}).join('') + '</div>').join(''));

// Fader scales
const faderTicks = [[3, 6], [24, 3], [42, 0], [57, 3], [69, 6], [84, 10], [96, 15], [106, 20], [120, 30], [127, 40], [137, '∞']];
const meterTicks = [[3, 0], [12, 3], [21, 6], [30, 9], [39, 12], [48, 15], [57, 18], [66, 21], [75, 24], [87, 30], [97, 35], [107, 40], [117, 45], [127, 50], [137, 60]];

document.getElementById('scale').innerHTML = faderTicks.map(([y, n]) =>
    `<text x="80" y="${y + 3}" text-anchor="end" font-size="8" fill="#b0b0b0">${n}</text><path d="M82 ${y + 0.5}h8" stroke="${n === 0 ? '#eee' : '#8a8a8a'}"/>`).join('');

function faderScale(x, meter) {
    let out = '';
    faderTicks.forEach(([y, n]) => {
        out += `<path d="M${x - 13} ${y - 0.5}h11" stroke="${n === 0 ? '#f4f4f4' : '#8c8c8c'}"/>`;
    });
    for (let y = 6; y < 136; y += 4) out += `<path d="M${x - 5} ${y + 0.5}h3" stroke="#777"/>`;
    out += `<path d="M${x} 1v137" stroke="#2c2c2c" stroke-width="2"/>`;
    if (meter) {
        meterTicks.forEach(([y, n]) => {
            out += `<text x="41" y="${Math.min(y + 2, 138)}" text-anchor="end" font-size="7" fill="#aaa">${n}</text><path d="M42 ${y - 0.5}h3" stroke="#8c8c8c"/>`;
        });
        out += `<path d="M44.500 2v135" stroke="#777" stroke-dasharray="1 2"/>`;
        out += meter === 2 ? '<rect x="45" y="1" width="10" height="137" fill="#323333"/>' : '<rect x="46" y="1" width="5" height="137" fill="#323333"/>';
    }
    return `<svg width="66" height="138">${out}</svg>`;
}

// name, number, colour, picture, pan, vca, dB, fader, meter
const G = '#1ca63f';
const strips = [
    ['Multi...rums', 1, G, 'kit', null, '', '0.0', 80, 0],
    ['Kick In', 2, G, 'wave', 0, 'MulDrm', '-0.4', 78, 1],
    ['Kick Sub', 3, G, 'wave', 0, 'MulDrm', '-10.7', 37, 1],
    ['SnareTop', 4, G, 'wave', 0, 'MulDrm', '-0.4', 78, 1],
    ['SnareBtm', 5, G, 'wave', 0, 'MulDrm', '-13.9', 28, 1],
    ['Hat', 6, G, 'wave', -19, 'MulDrm', '-15.5', 24, 1],
    ['Tom1', 7, G, 'wave', -44, 'MulDrm', '-13.9', 28, 1],
    ['Tom2', 8, G, 'wave', 44, 'MulDrm', '-9.5', 40, 1],
    ['Overheads', 9, G, 'wave', 0, 'MulDrm', '-6.6', 50, 2],
    ['Rooms', 10, G, 'wave', 0, 'MulDrm', '-14.9', 26, 2],
    ['Mon...oom', 11, G, 'wave', 0, 'MulDrm', '-21.2', 14, 1],
    ['Drums', 12, '#1f7193', 'kit', 0, 'open', '0.0', 80, 2],
    ['Dru...ments', 13, '#1a9f94', 'snare', null, '', '0.0', 80, 0],
    ['Bass', 20, '#443a9c', 'bass', 0, 'open', '-8.6', 43, 1],
    ['Banjo', 21, '#92983a', 'banjo', 11, 'open', '-8.2', 45, 2],
    ['Elec...uitar', 22, '#92322c', 'gtr', null, '', '0.0', 80, 0],
    ['Roto Guitar', 26, '#54332b', 'roto', 25, 'open', '-8.4', 44, 2],
    ['Output 1-2', 27, '#4f3274', 'wave', 0, '', '0.0', 80, 2],
    ['Master', '', '#4f3274', 'wave', null, '', '0.0', 80, 0]
];
const sizes = { wave: [30, 23], kit: [32, 26], snare: [32, 26] };

document.getElementById('strips').innerHTML = strips.map(([name, num, color, pic, pan, vca, db, pos, meter]) => {
    const [w, h] = sizes[pic] || [32, 32];
    const muted = num === 12 || num === 13;
    const arrow = num === 1 ? 'M0 0v8l8-4z' : num === 13 || num === 22 ? 'M0 8h8L4 0z' : '';
    const sign = pan > 0 ? '+' : '';
    let ir = '';
    if (num === 27) ir = '<div class="ir bnc"><button>Bnc</button></div>';
    else if (meter) ir = '<div class="ir"><button>I</button><button>R</button></div>';
    return `<div class="strip ${color === G ? 'kit' : ''} ${num === 1 ? 'sel' : ''}">
        <div class="upper">
            <button class="read ${num === 12 ? 'live' : ''}">Read</button>
            <div class="pic"><svg width="${w}" height="${h}"><use href="#${pic}"/></svg></div>
            <div class="knob">${pan === null ? '' : knob(pan, 36, pan ? sign + pan : '')}</div>
            <div class="vca ${vca === 'open' ? 'open' : vca ? '' : 'none'}">${vca === 'open' ? '' : vca}</div>
            <div class="db ${meter ? 'split' : ''}"><span>${db}</span>${meter ? '<i></i>' : ''}</div>
            <div class="fader ${meter ? '' : 'solo-f'}">${faderScale(meter ? 17 : 33, meter)}<input type="range" min="0" max="104" value="${pos}" aria-label="${name} level"></div>
            <div class="irrow">${ir}</div>
            <div class="ms"><button class="${muted ? 'muted' : ''}">M</button><button>${name === 'Master' ? 'D' : 'S'}</button></div>
        </div>
        <div class="under">${arrow ? `<svg width="8" height="8"><path d="${arrow}" fill="#ddd"/></svg>` : ''}</div>
        <div class="title" style="background:${color};color:${color === G ? '#b4f5bf' : num === 26 ? '#b09088' : '#e4ecff'}"><span>${name}</span><span>${num}</span></div>
    </div>`;
}).join('');
```
